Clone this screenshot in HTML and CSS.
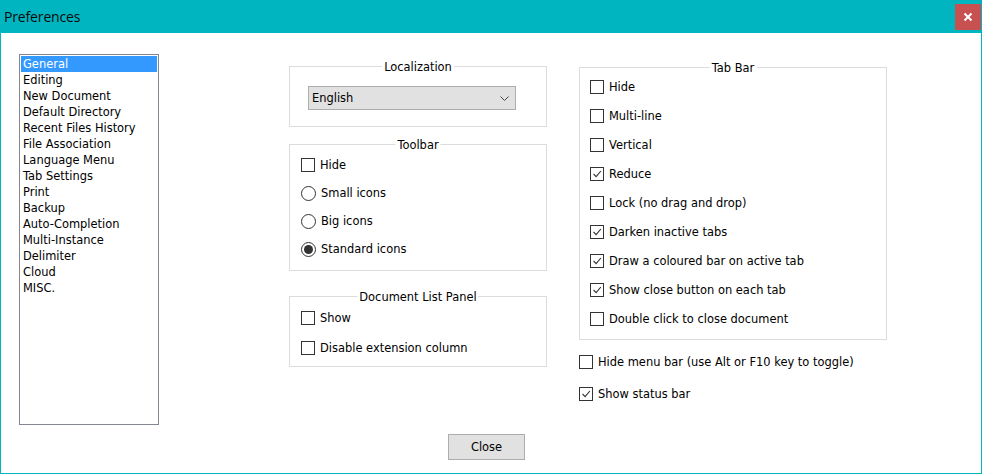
FILE: index.html
```html
<!DOCTYPE html>
<html lang="en">
<head>
    <meta charset="UTF-8">
    <title>Preferences</title>
    <link rel="stylesheet" href="styles.css">
</head>
<body>

    <div class="window">
        <div class="titlebar">
            <span class="title">Preferences</span>
            <button class="close-x" aria-label="Close">
                <svg width="10" height="10" viewBox="0 0 10 10"><path d="M1.5 1.5 L8.5 8.5 M8.5 1.5 L1.5 8.5" stroke="#fff" stroke-width="2"/></svg>
            </button>
        </div>

        <div class="content">
            <div class="columns">
                <ul class="listbox">
                    <li class="selected">General</li>
                    <li>Editing</li>
                    <li>New Document</li>
                    <li>Default Directory</li>
                    <li>Recent Files History</li>
                    <li>File Association</li>
                    <li>Language Menu</li>
                    <li>Tab Settings</li>
                    <li>Print</li>
                    <li>Backup</li>
                    <li>Auto-Completion</li>
                    <li>Multi-Instance</li>
                    <li>Delimiter</li>
                    <li>Cloud</li>
                    <li>MISC.</li>
                </ul>

                <div class="col-mid">
                    <div class="group loc">
                        <span class="group-title">Localization</span>
                        <div class="combo">
                            <span>English</span>
                            <svg width="9" height="5" viewBox="0 0 9 5"><path d="M0.5 0.5 L4.5 4.5 L8.5 0.5" fill="none" stroke="#444" stroke-width="1"/></svg>
                        </div>
                    </div>

                    <div class="group toolbar">
                        <span class="group-title">Toolbar</span>
                        <label class="row"><span class="check"></span>Hide</label>
                        <label class="row"><span class="radio"></span>Small icons</label>
                        <label class="row"><span class="radio"></span>Big icons</label>
                        <label class="row"><span class="radio on"></span>Standard icons</label>
                    </div>

                    <div class="group doclist">
                        <span class="group-title">Document List Panel</span>
                        <label class="row"><span class="check"></span>Show</label>
                        <label class="row"><span class="check"></span>Disable extension column</label>
                    </div>
                </div>

                <div class="col-right">
                    <div class="group tabbar">
                        <span class="group-title">Tab Bar</span>
                        <label class="row"><span class="check"></span>Hide</label>
                        <label class="row"><span class="check"></span>Multi-line</label>
                        <label class="row"><span class="check"></span>Vertical</label>
                        <label class="row"><span class="check on"><svg viewBox="0 0 14 14"><path d="M3 7 L6 10 L11.5 3.5" fill="none" stroke="#333" stroke-width="1.3"/></svg></span>Reduce</label>
                        <label class="row"><span class="check"></span>Lock (no drag and drop)</label>
                        <label class="row"><span class="check on"><svg viewBox="0 0 14 14"><path d="M3 7 L6 10 L11.5 3.5" fill="none" stroke="#333" stroke-width="1.3"/></svg></span>Darken inactive tabs</label>
                        <label class="row"><span class="check on"><svg viewBox="0 0 14 14"><path d="M3 7 L6 10 L11.5 3.5" fill="none" stroke="#333" stroke-width="1.3"/></svg></span>Draw a coloured bar on active tab</label>
                        <label class="row"><span class="check on"><svg viewBox="0 0 14 14"><path d="M3 7 L6 10 L11.5 3.5" fill="none" stroke="#333" stroke-width="1.3"/></svg></span>Show close button on each tab</label>
                        <label class="row"><span class="check"></span>Double click to close document</label>
                    </div>

                    <div class="extra">
                        <label class="row"><span class="check"></span>Hide menu bar (use Alt or F10 key to toggle)</label>
                        <label class="row"><span class="check on"><svg viewBox="0 0 14 14"><path d="M3 7 L6 10 L11.5 3.5" fill="none" stroke="#333" stroke-width="1.3"/></svg></span>Show status bar</label>
                    </div>
                </div>
            </div>

            <div class="footer">
                <button class="btn">Close</button>
            </div>
        </div>
    </div>

</body>
</html>
```

FILE: styles.css
```css
* {
    box-sizing: border-box;
}
body {
    margin: 0;
    background: #fff;
    font-family: "DejaVu Sans", Tahoma, sans-serif;
    font-size: 11.45px;
    color: #000;
}
.window {
    width: 982px;
    height: 474px;
    border: 1px solid #00b4c0;
    border-top: none;
    background: #fff;
}
.titlebar {
    height: 33px;
    background: #00b4c0;
    display: flex;
    justify-content: space-between;
    align-items: flex-start;
    padding-left: 3px;
}
.title {
    font-family: "Open Sans", "Noto Sans", sans-serif;
    font-size: 14px;
    line-height: 34px;
    letter-spacing: -0.15px;
    color: #0a0a0a;
}
.close-x {
    width: 26px;
    height: 26px;
    margin-top: 4px;
    border: none;
    padding: 0;
    background: #c75050;
    display: flex;
    align-items: center;
    justify-content: center;
}
.content {
    padding: 21px 0 0 18px;
}
.columns {
    display: flex;
    align-items: flex-start;
}
.listbox {
    list-style: none;
    margin: 0;
    padding: 1px;
    width: 140px;
    height: 371px;
    border: 1px solid #828790;
}
.listbox li {
    height: 16px;
    line-height: 16px;
    padding-left: 2px;
    white-space: nowrap;
}
.listbox li.selected {
    background: #3399ff;
    color: #fff;
}
.col-mid {
    width: 258px;
    margin-left: 130px;
    margin-top: 12px;
}
.col-right {
    width: 308px;
    margin-left: 32px;
    margin-top: 13px;
}
.group {
    position: relative;
    border: 1px solid #dcdcdc;
}
.group-title {
    position: absolute;
    top: -7px;
    left: 50%;
    transform: translateX(-50%);
    background: #fff;
    padding: 0 2px;
    line-height: 14px;
    white-space: nowrap;
}
.loc {
    height: 61px;
    padding: 19px 0 0 18px;
}
.combo {
    width: 208px;
    height: 24px;
    background: #e1e1e1;
    border: 1px solid #adadad;
    display: flex;
    align-items: center;
    justify-content: space-between;
    padding: 0 6px 0 3px;
}
.toolbar {
    height: 127px;
    margin-top: 17px;
    padding: 6px 0 0 11px;
}
.toolbar .row {
    height: 28px;
}
.doclist {
    height: 71px;
    margin-top: 25px;
    padding: 6px 0 0 11px;
}
.doclist .row {
    height: 30px;
}
.tabbar {
    height: 273px;
    padding: 4px 0 0 10px;
}
.tabbar .row {
    height: 29px;
}
.extra {
    margin-top: 6px;
}
.extra .row {
    height: 32px;
}
.row {
    display: flex;
    align-items: center;
    gap: 5px;
    white-space: nowrap;
}
.check {
    width: 14px;
    height: 14px;
    border: 1px solid #333;
    background: #fff;
    flex: none;
    display: flex;
}
.check svg {
    width: 12px;
    height: 12px;
}
.radio {
    width: 15px;
    height: 15px;
    border: 1px solid #333;
    border-radius: 50%;
    background: #fff;
    flex: none;
    display: flex;
    align-items: center;
    justify-content: center;
}
.radio.on::after {
    content: "";
    width: 9px;
    height: 9px;
    border-radius: 50%;
    background: #333;
}
.footer {
    margin-top: 9px;
    padding-left: 429px;
}
.btn {
    width: 77px;
    height: 26px;
    background: #e1e1e1;
    border: 1px solid #adadad;
    font-family: inherit;
    font-size: 11.45px;
    color: #000;
    padding: 0;
}
```
